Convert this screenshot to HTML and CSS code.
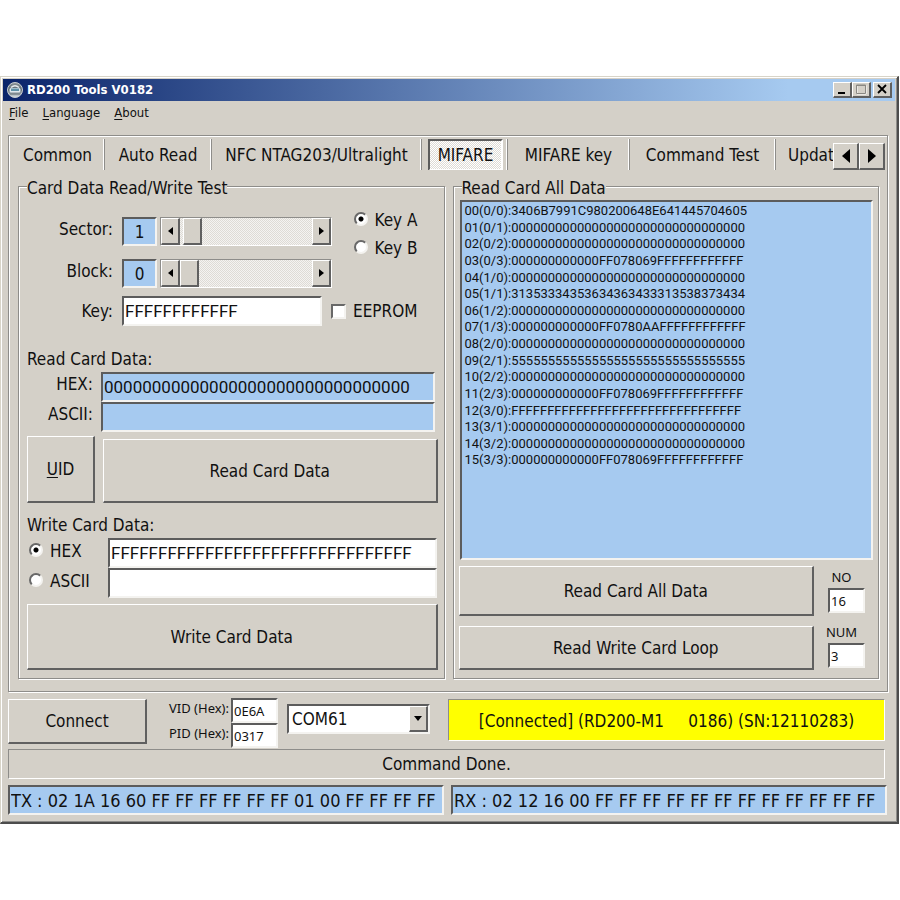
FILE: index.html
```html
<!DOCTYPE html>
<html lang="en">
<head>
<meta charset="utf-8">
<meta name="viewport" content="width=device-width, initial-scale=1">
<title>RD200 Tools V0182</title>
<link rel="stylesheet" href="styles.css">
</head>
<body>
<main class="window">
  <header class="titlebar">
    <svg class="app-icon" viewBox="0 0 16 16" aria-hidden="true">
      <defs><linearGradient id="ball" x2="0" y2="1"><stop offset="0" stop-color="#8e9699"/><stop offset=".5" stop-color="#55656d"/><stop offset="1" stop-color="#dce3e6"/></linearGradient></defs>
      <circle cx="8" cy="8" r="7.5" fill="url(#ball)" stroke="#c9ced1"/>
      <path d="M4 5.500Q8 2 12 5.500" fill="none" stroke="#e6ebee" stroke-width="1.500"/>
      <rect x="2.500" y="6" width="11" height="4.500" rx="1.500" fill="#dfe8ec"/>
      <rect x="4" y="6.500" width="8" height="2.500" fill="#5f92a8"/>
      <path d="M3 12h10" stroke="#6a7478"/>
    </svg>
    <h1 class="title">RD200 Tools V0182</h1>
    <div class="caption-buttons">
      <button class="raised caption" type="button" aria-label="Minimize"><svg viewBox="0 0 14 11"><path d="M3 8h7v2H3z"/></svg></button>
      <button class="raised caption" type="button" aria-label="Maximize" disabled><svg viewBox="0 0 14 11"><path d="M3 1.500h9v8.500H3z" fill="none" stroke="#fff"/><path d="M2.500 1h9v8.500h-9z" fill="none" stroke="#8a8883"/><path d="M2 1h10v1H2z" fill="#8a8883"/></svg></button>
      <button class="raised caption close" type="button" aria-label="Close"><svg viewBox="0 0 14 11"><path d="M3 1l8 8M11 1L3 9" stroke="#000" stroke-width="1.800"/></svg></button>
    </div>
  </header>
  <nav class="menu" aria-label="Menu">
    <button type="button"><u>F</u>ile</button>
    <button type="button"><u>L</u>anguage</button>
    <button type="button"><u>A</u>bout</button>
  </nav>

  <section class="pages">
    <div class="tabbar">
      <div class="tabs">
        <button type="button">Common</button>
        <button type="button">Auto Read</button>
        <button type="button">NFC NTAG203/Ultralight</button>
        <button type="button" class="selected" aria-pressed="true"><span>MIFARE</span></button>
        <button type="button">MIFARE key</button>
        <button type="button">Command Test</button>
        <button type="button">Update</button>
      </div>
      <div class="tab-scroll">
        <button class="raised" type="button" aria-label="Previous tabs"><svg viewBox="0 0 8 14"><path d="M8 0v14L0 7z"/></svg></button>
        <button class="raised" type="button" aria-label="Next tabs"><svg viewBox="0 0 8 14"><path d="M0 0v14l8-7z"/></svg></button>
      </div>
    </div>

    <div class="groups">
      <section class="group" aria-labelledby="g1">
        <h2 class="legend" id="g1">Card Data Read/Write Test</h2>
        <div class="settings">
          <div class="address">
            <label for="sector">Sector:</label>
            <output class="sunken number" for="sector">1</output>
            <div class="scrollbar">
              <button class="raised" type="button" aria-label="Previous sector"><svg viewBox="0 0 5 8"><path d="M5 0v8L0 4z"/></svg></button>
              <input id="sector" type="range" min="0" max="39" value="1">
              <button class="raised" type="button" aria-label="Next sector"><svg viewBox="0 0 5 8"><path d="M0 0v8l5-4z"/></svg></button>
            </div>
            <label for="block">Block:</label>
            <output class="sunken number" for="block">0</output>
            <div class="scrollbar">
              <button class="raised" type="button" aria-label="Previous block"><svg viewBox="0 0 5 8"><path d="M5 0v8L0 4z"/></svg></button>
              <input id="block" type="range" min="0" max="3" value="0">
              <button class="raised" type="button" aria-label="Next block"><svg viewBox="0 0 5 8"><path d="M0 0v8l5-4z"/></svg></button>
            </div>
          </div>
          <div class="keytype">
            <label><input type="radio" name="keytype" checked>Key A</label>
            <label><input type="radio" name="keytype">Key B</label>
          </div>
        </div>
        <div class="keyrow">
          <label for="key">Key:</label>
          <input class="sunken field" id="key" type="text" value="FFFFFFFFFFFF">
          <label class="check"><input type="checkbox">EEPROM</label>
        </div>

        <h3 class="subhead">Read Card Data:</h3>
        <div class="readgrid">
          <label for="rhex">HEX:</label>
          <input class="sunken field blue" id="rhex" type="text" readonly value="00000000000000000000000000000000">
          <label for="rascii">ASCII:</label>
          <input class="sunken field blue" id="rascii" type="text" readonly>
        </div>
        <div class="readbuttons">
          <button class="raised uid" type="button"><span><u>U</u>ID</span></button>
          <button class="raised read" type="button">Read Card Data</button>
        </div>

        <h3 class="subhead">Write Card Data:</h3>
        <div class="writegrid">
          <label><input type="radio" name="fmt" checked>HEX</label>
          <input class="sunken field" type="text" aria-label="HEX data" value="FFFFFFFFFFFFFFFFFFFFFFFFFFFFFFFF">
          <label><input type="radio" name="fmt">ASCII</label>
          <input class="sunken field" type="text" aria-label="ASCII data">
        </div>
        <button class="raised write" type="button">Write Card Data</button>
      </section>

      <section class="group all" aria-labelledby="g2">
        <h2 class="legend" id="g2">Read Card All Data</h2>
        <div class="sunken dump">
          <ul>
            <li>00(0/0):3406B7991C980200648E641445704605</li>
            <li>01(0/1):00000000000000000000000000000000</li>
            <li>02(0/2):00000000000000000000000000000000</li>
            <li>03(0/3):000000000000FF078069FFFFFFFFFFFF</li>
            <li>04(1/0):00000000000000000000000000000000</li>
            <li>05(1/1):31353334353634363433313538373434</li>
            <li>06(1/2):00000000000000000000000000000000</li>
            <li>07(1/3):000000000000FF0780AAFFFFFFFFFFFF</li>
            <li>08(2/0):00000000000000000000000000000000</li>
            <li>09(2/1):55555555555555555555555555555555</li>
            <li>10(2/2):00000000000000000000000000000000</li>
            <li>11(2/3):000000000000FF078069FFFFFFFFFFFF</li>
            <li>12(3/0):FFFFFFFFFFFFFFFFFFFFFFFFFFFFFFFF</li>
            <li>13(3/1):00000000000000000000000000000000</li>
            <li>14(3/2):00000000000000000000000000000000</li>
            <li>15(3/3):000000000000FF078069FFFFFFFFFFFF</li>
          </ul>
        </div>
        <div class="allactions">
          <div class="allbuttons">
            <button class="raised" type="button">Read Card All Data</button>
            <button class="raised" type="button">Read Write Card Loop</button>
          </div>
          <div class="counts">
            <label for="no">NO</label>
            <input class="sunken small" id="no" type="text" value="16">
            <label for="num">NUM</label>
            <input class="sunken small" id="num" type="text" value="3">
          </div>
        </div>
      </section>
    </div>
  </section>

  <section class="connection">
    <button class="raised connect" type="button">Connect</button>
    <div class="ids">
      <label for="vid">VID (Hex):</label>
      <input class="sunken small" id="vid" type="text" value="0E6A">
      <label for="pid">PID (Hex):</label>
      <input class="sunken small" id="pid" type="text" value="0317">
    </div>
    <div class="sunken combo">
      <select aria-label="Port"><option>COM61</option></select>
      <span class="raised drop" aria-hidden="true"><svg viewBox="0 0 8 5"><path d="M0 0h8L4 5z"/></svg></span>
    </div>
    <output class="inset state">[Connected] (RD200-M1     0186) (SN:12110283)</output>
  </section>
  <output class="inset status">Command Done.</output>
  <footer class="traffic">
    <input class="sunken field blue" type="text" readonly aria-label="Sent bytes" value="TX : 02 1A 16 60 FF FF FF FF FF FF 01 00 FF FF FF FF">
    <input class="sunken field blue" type="text" readonly aria-label="Received bytes" value="RX : 02 12 16 00 FF FF FF FF FF FF FF FF FF FF FF FF">
  </footer>
</main>
</body>
</html>
```
FILE: styles.css
```css
:root {
  --face: #d4d0c8;
  --blue: #a6caf0;
  --shadow: #8e8d8a;
  --dark: #4c4c4c;
  --small: 13px;
  --ui: "DejaVu Sans Condensed", "DejaVu Sans", sans-serif;
  --data: Roboto, "Noto Sans", sans-serif;
}
* { box-sizing: border-box; }
body {
  margin: 0;
  padding-top: 76px;
  background: #fff;
  color: #111;
  font: 17px/24px var(--ui);
}
button, input, select { font: inherit; color: inherit; margin: 0; border-radius: 0; }
button { padding: 0; border: 0; background: none; }
h1, h2, h3, ul { margin: 0; padding: 0; font-weight: 400; font-size: inherit; list-style: none; }
svg { display: block; }

.window {
  margin-right: 1px;
  padding: 1px 5px 7px 2px;
  background: var(--face);
  border: 1px solid #d8d4c8;
  border-right: 2px solid var(--dark);
  border-bottom: 2px solid var(--dark);
  box-shadow: inset 1px 1px #fff, inset -1px -1px var(--shadow);
}

.raised {
  display: flex;
  align-items: center;
  justify-content: center;
  background: var(--face);
  border: 1px solid #fff;
  border-right: 2px solid #606060;
  border-bottom: 2px solid #606060;
}
.sunken {
  border: 2px solid;
  border-color: #5c5c5c #f4f3f0 #f4f3f0 #5c5c5c;
  border-radius: 0;
  outline: 0;
}
.inset {
  border: 1px solid;
  border-color: var(--shadow) #fff #fff var(--shadow);
}

.titlebar {
  display: flex;
  align-items: center;
  height: 22px;
  margin: 1px -3px 0 0;
  padding: 0 3px 0 4px;
  background: linear-gradient(to right, #0a246a, #a6caf0 88%);
}
.app-icon { width: 16px; height: 16px; }
.title { flex: 1; margin-left: 4px; color: #fff; font: bold 13px/20px var(--ui); }
.caption-buttons { display: flex; }
.caption { width: 19px; height: 16px; border-width: 1px 2px 2px 1px; }
.caption svg { width: 14px; height: 11px; }
.close { margin-left: 2px; }

.menu { display: flex; gap: 14px; height: 34px; padding: 2px 6px 0; align-items: flex-start; }
.menu button { font-size: 13px; line-height: 20px; }
u { text-underline-offset: 2px; }

.pages {
  margin: 0 4px 0 5px;
  border: 1px solid var(--shadow);
  box-shadow: inset 1px 1px #fff, 1px 1px #fff;
  padding: 3px 2px 12px;
}
.tabbar { display: flex; height: 31px; }
.tabs {
  flex: 1;
  display: grid;
  grid-template-columns: 94px 107px 210px 86px 122px 146px max-content;
  min-width: 0;
  overflow: hidden;
}
.tabs button {
  white-space: nowrap;
  border-right: 1px solid var(--shadow);
  box-shadow: inset -1px 0 #fff;
}
.tabs button:last-child { padding: 0 12px; }
.tabs .selected { padding: 0 4px 0 6px; }
.selected span {
  display: block;
  padding: 2px 0;
  border: 2px solid;
  border-color: #5c5c5c #fff #fff #5c5c5c;
  background: repeating-conic-gradient(#fff 0 25%, #dedbd5 0 50%) 0 0 / 2px 2px;
}
.tab-scroll { display: flex; align-items: flex-end; }
.tab-scroll .raised { width: 26px; height: 27px; }
.tab-scroll svg { width: 8px; height: 14px; }

.groups { display: grid; grid-template-columns: 1fr 1fr; gap: 8px; padding: 16px 6px 0 7px; }
.group {
  height: 493px;
  border: 1px solid var(--shadow);
  box-shadow: inset 1px 1px #fff, 1px 1px #fff;
  padding: 0 6px 0 8px;
}
.legend { width: max-content; height: 22px; margin-top: -11px; line-height: 24px; background: var(--face); }
.all { padding: 0 5px; }
.all .legend { margin-left: 3px; }

.settings { display: flex; justify-content: space-between; padding: 19px 20px 0 0; }
.address {
  display: grid;
  grid-template-columns: 92px 35px 172px;
  grid-template-rows: 29px 29px;
  gap: 13px 3px;
}
.address > label { justify-self: end; padding-right: 6px; }
.number { background: var(--blue); text-align: center; line-height: 26px; }
.scrollbar { display: flex; border: 1px solid; border-color: var(--shadow) #fff #fff var(--shadow); }
.scrollbar .raised { width: 19px; }
.scrollbar svg { width: 5px; height: 8px; }
.scrollbar input {
  appearance: none;
  flex: 1;
  min-width: 0;
  height: 100%;
  background: repeating-conic-gradient(#f4f3f1 0 25%, #dedbd5 0 50%) 0 0 / 2px 2px;
}
.scrollbar input::-webkit-slider-thumb {
  appearance: none;
  width: 19px;
  height: 27px;
  background: var(--face);
  border: 1px solid #fff;
  border-right: 2px solid #606060;
  border-bottom: 2px solid #606060;
}
.keytype { display: grid; grid-auto-rows: 28px; margin-top: -11px; }
label:has(input) { display: flex; align-items: center; white-space: nowrap; }
input[type="radio"] {
  appearance: none;
  flex: none;
  width: 14px;
  height: 14px;
  margin: 0 7px 2px 2px;
  border: 2px solid;
  border-color: #686868 #f4f3f0 #f4f3f0 #686868;
  border-radius: 50%;
  background: #fff;
}
input[type="radio"]:checked { background: radial-gradient(circle, #000 2px, #fff 3px); }
input[type="checkbox"] {
  appearance: none;
  width: 15px;
  height: 15px;
  margin-right: 7px;
  border: 2px solid;
  border-color: #686868 #f4f3f0 #f4f3f0 #686868;
  background: #fff;
}
.field { min-width: 0; height: 30px; padding: 0 1px; font-family: var(--data); background: #fff; }
.blue { background: var(--blue); }
.keyrow { display: grid; grid-template-columns: 86px 200px auto; column-gap: 9px; align-items: center; justify-content: start; margin-top: 8px; }
.keyrow > label:first-child { justify-self: end; }
.subhead { height: 24px; }
.keyrow + .subhead { margin-top: 21px; }
.readgrid { display: grid; grid-template-columns: 66px 1fr; column-gap: 8px; padding-right: 3px; margin-top: 1px; }
.readgrid label { justify-self: end; }
.readbuttons { display: flex; gap: 8px; align-items: flex-end; margin: 4px 0 10px; }
.uid { width: 68px; height: 67px; }
.read { flex: 1; height: 64px; }
.writegrid { display: grid; grid-template-columns: 81px 1fr; padding-right: 1px; margin-top: 1px; }
.writegrid label { height: 26px; }
.write { width: 100%; height: 66px; margin-top: 6px; }

.dump { height: 360px; margin: 2px 0 6px 1px; padding: 1px 3px; background: var(--blue); font: var(--small)/16px var(--data); }
.dump ul { display: grid; grid-template-rows: repeat(16, 1fr); height: 266px; }
.allactions { display: flex; justify-content: space-between; padding-right: 8px; }
.allbuttons { flex: 1; display: grid; grid-template-rows: 50px 44px; gap: 10px; }
.counts { width: 37px; margin-left: 14px; text-align: center; }
.counts label { display: block; margin: 0 6px 0 -4px; line-height: 22px; }
.small { width: 100%; height: 25px; padding: 0 1px; background: #fff; }
.small, .counts, .ids { font-family: "Noto Sans", sans-serif; font-size: var(--small); }
.counts .small { display: block; margin-bottom: 8px; }

.connection { display: flex; align-items: flex-start; margin: 7px 7px 0 5px; }
.connect { width: 139px; height: 45px; }
.ids { display: grid; grid-template-columns: 80px 47px; margin: -1px 0 1px 4px; text-align: right; }
.ids label { line-height: 20px; padding-right: 2px; }
.combo { display: flex; width: 143px; height: 30px; margin: 5px 18px 0 9px; background: #fff; }
.combo select { flex: 1; min-width: 0; appearance: none; border: 0; padding: 0 3px; background: none; outline: 0; }
.drop { width: 19px; pointer-events: none; }
.drop svg { width: 8px; height: 5px; }
.state { flex: 1; height: 42px; background: #ff0; text-align: center; line-height: 42px; white-space: pre; }
.status { display: block; height: 30px; margin: 0 7px 0 5px; text-align: center; line-height: 28px; }
.traffic { display: grid; grid-template-columns: 1fr 1fr; gap: 7px; margin: 6px 5px 0 5px; }
.traffic .field { width: 100%; font: 18px var(--ui); }
```
